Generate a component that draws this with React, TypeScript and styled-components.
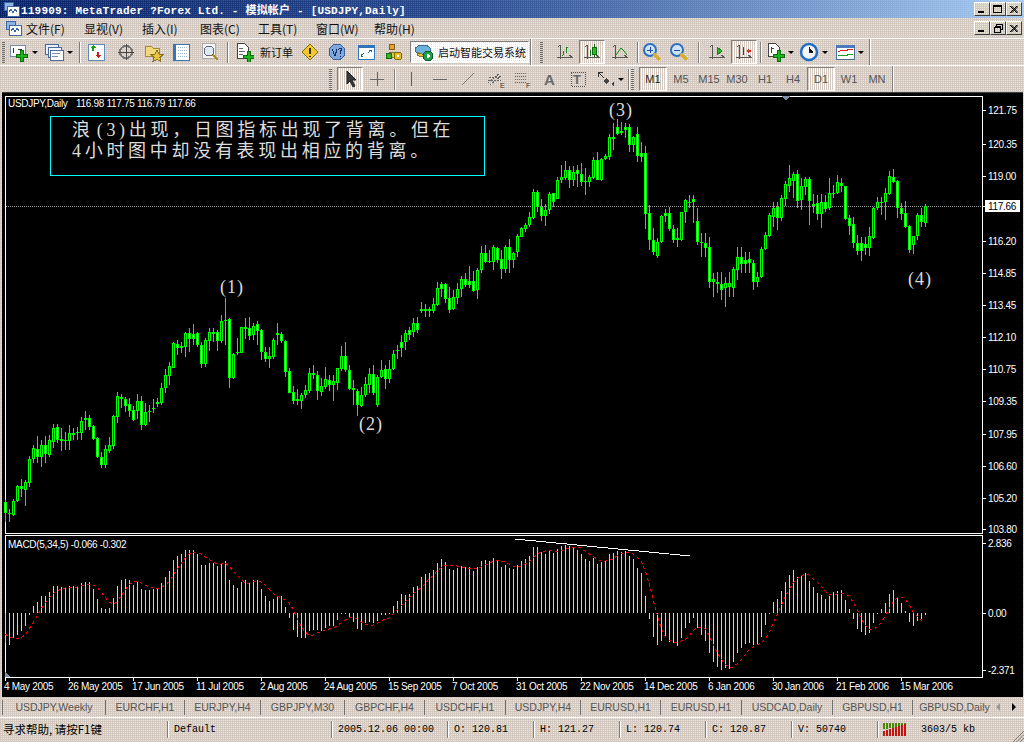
import React from 'react'
import styled, { createGlobalStyle, css } from 'styled-components'

const GlobalStyle = createGlobalStyle`
  html, body {
    margin: 0;
    padding: 0;
    background: #000;
  }
  body {
    width: 1024px;
    height: 742px;
    overflow: hidden;
    font-family: "Liberation Sans", "Noto Sans CJK SC", sans-serif;
  }
`

// 256-colour desktop: the grey chrome comes out as a dotted dither
const chrome = css`
  background-color: #d3c9c1;
  background-image: conic-gradient(#ebe8d6 0 25%, transparent 0);
  background-size: 2px 2px;
`

const Page = styled.div`
  width: 1024px;
  height: 742px;
  display: flex;
  flex-direction: column;
  ${chrome}
`

const TitleBar = styled.div`
  height: 18px;
  display: flex;
  align-items: center;
  padding-left: 3px;
  gap: 1px;
  background-image: conic-gradient(rgba(255, 255, 255, 0.14) 0 25%, transparent 0),
    linear-gradient(90deg, #0a246a 0%, #2c4c90 45%, #a6caf0 100%);
  background-size: 2px 2px, 100% 100%;
`

const TitleText = styled.div`
  flex: 1;
  color: #fff;
  font: bold 11px "Liberation Mono", "Noto Sans CJK SC", monospace;
  letter-spacing: 0.2px;
  white-space: pre;
`

const MenuBar = styled.div`
  height: 20px;
  display: flex;
  align-items: center;
  padding-left: 5px;
`

const MenuIcon = styled.div`
  width: 21px;
  height: 16px;
`

const MenuItem = styled.div`
  width: 58px;
  font: 12px "Noto Sans CJK SC", sans-serif;
  color: #111;
  white-space: nowrap;
`

const MenuSpacer = styled.div`
  flex: 1;
`

const WindowButtons = styled.div`
  display: flex;
  margin-right: 2px;
`

const WindowButton = styled.div`
  width: 16px;
  height: 14px;
  box-sizing: border-box;
  ${chrome}
  border: 1px solid;
  border-color: #fff #404040 #404040 #fff;
  display: flex;
  align-items: center;
  justify-content: center;
`

const Toolbar = styled.div`
  height: 27px;
  box-sizing: border-box;
  display: flex;
  align-items: center;
  border-top: 1px solid #fff;
`

const ToolbarTail = styled.div`
  width: 1px;
  height: 26px;
  background: #808080;
  box-shadow: 1px 0 #fff;
  margin-left: 1px;
`

const Grip = styled.div<{ $left?: number; $right?: number }>`
  width: 3px;
  height: 21px;
  margin: 0 ${(p) => p.$right ?? 2}px 0 ${(p) => p.$left ?? 2}px;
  background-image: linear-gradient(#6f6f6f 50%, transparent 50%);
  background-size: 3px 2px;
`

const Separator = styled.div<{ $w: number }>`
  width: ${(p) => p.$w}px;
  height: 21px;
  display: flex;
  justify-content: center;
  &::before {
    content: '';
    width: 1px;
    background: #808080;
    box-shadow: 1px 0 #fff;
  }
`

const ToolButton = styled.div<{ $w: number; $pressed?: boolean }>`
  width: ${(p) => p.$w}px;
  height: 24px;
  box-sizing: border-box;
  display: flex;
  align-items: center;
  justify-content: center;
  gap: 1px;
  ${(p) =>
    p.$pressed &&
    css`
      border: 1px solid;
      border-color: #808080 #fff #fff #808080;
      background-image: conic-gradient(#fff 0 50%, transparent 0);
      background-size: 2px 2px;
    `}
`

const Caret = styled.div`
  width: 0;
  height: 0;
  border-left: 3px solid transparent;
  border-right: 3px solid transparent;
  border-top: 3px solid #000;
  margin-left: 2px;
`

const OrderLabel = styled.span`
  font: 11px "Noto Sans CJK SC", sans-serif;
  color: #111;
  margin-left: 5px;
  white-space: nowrap;
`

const ExpertBox = styled.div`
  width: 119px;
  height: 22px;
  margin-left: 3px;
  box-sizing: border-box;
  border: 1px solid #fff;
  border-color: #808080 #fff #fff #808080;
  background-image: conic-gradient(#fff 0 75%, transparent 0);
  background-size: 2px 2px;
  display: flex;
  align-items: center;
  gap: 4px;
  padding-left: 3px;
  font: 11px "Noto Sans CJK SC", sans-serif;
  color: #111;
  white-space: nowrap;
`

const PeriodButton = styled(ToolButton)<{ $dark?: boolean }>`
  font-size: 11px;
  color: ${(p) => (p.$dark ? '#222' : '#555')};
`

const ChartArea = styled.div`
  position: relative;
  height: 604px;
  margin: 0 1px 0 2px;
  background: #000;
  display: flex;
  flex-direction: column;
  border-top: 1px solid #404040;
`

const ChartSvg = styled.svg`
  display: block;
  flex: none;
  text {
    font-family: "Liberation Sans", sans-serif;
    font-size: 10px;
    letter-spacing: -0.3px;
    fill: #fff;
  }
  text.wave {
    font-family: "Liberation Serif", serif;
    font-size: 18px;
    fill: #ddd;
    letter-spacing: 1px;
  }
`

const NoteBox = styled.div`
  position: absolute;
  left: 48px;
  top: 23px;
  width: 435px;
  height: 60px;
  box-sizing: border-box;
  border: 1px solid #00ffff;
  padding: 3px 0 0 21px;
  color: #ddd;
  font: 18px/21px "Liberation Serif", "Noto Sans CJK SC", serif;
  letter-spacing: 3.7px;
  white-space: nowrap;
`

const NoteRef = styled.span`
  margin-left: 3px;
`

const TabStrip = styled.div`
  height: 20px;
  display: flex;
  align-items: center;
  padding-left: 2px;
`

const Tab = styled.div<{ $w: number }>`
  width: ${(p) => p.$w}px;
  height: 15px;
  line-height: 15px;
  text-align: center;
  font-size: 10.5px;
  color: #555;
  border-left: 1px solid #707070;
  box-sizing: border-box;
  white-space: nowrap;
`

const TabArrows = styled.div`
  flex: 1;
  display: flex;
  align-items: center;
  gap: 12px;
`

const TabArrow = styled.div<{ $right?: boolean }>`
  width: 0;
  height: 0;
  border-top: 4px solid transparent;
  border-bottom: 4px solid transparent;
  ${(p) => (p.$right ? 'border-left: 4px solid #000;' : 'border-right: 4px solid #999;')}
`

const StatusBar = styled.div`
  position: relative;
  flex: 1;
  display: flex;
  align-items: center;
  border-top: 1px solid #fff;
  padding-bottom: 2px;
`

const StatusCell = styled.div<{ $w: number; $cjk?: boolean }>`
  width: ${(p) => p.$w}px;
  height: 17px;
  line-height: 17px;
  box-sizing: border-box;
  padding-left: ${(p) => (p.$cjk ? 3 : 6)}px;
  border-right: 1px solid #808080;
  box-shadow: 1px 0 #fff;
  font: ${(p) => (p.$cjk ? '11.5px/17px "Noto Sans CJK SC", sans-serif' : '10px/17px "Liberation Mono", monospace')};
  color: #000;
  white-space: pre;
`

const Traffic = styled.div`
  display: flex;
  align-items: center;
  gap: 14px;
  padding-left: 5px;
  font: 10px "Liberation Mono", monospace;
  color: #000;
`

const Resize = styled.svg`
  position: absolute;
  right: 0;
  bottom: 0;
`

/* --- toolbar glyphs --- */

const Ico = ({ children, w = 20, h = 20 }: { children: React.ReactNode; w?: number; h?: number }) => (
  <svg width={w} height={h} viewBox={`0 0 ${w} ${h}`} shapeRendering="crispEdges">
    {children}
  </svg>
)

const Axes = ({ c = '#555' }: { c?: string }) => (
  <path d="M5 3v14M2 15h16M5 3l-2 2M14 13l3 2" stroke={c} fill="none" />
)

const Plus = ({ x, y }: { x: number; y: number }) => (
  <path d={`M${x + 4} ${y}h3v4h4v3h-4v4h-3v-4h-4v-3h4z`} fill="#1db51d" stroke="#0a6f0a" />
)

const icons: Record<string, React.ReactNode> = {
  app: (
    <>
      <rect x="1" y="1" width="9" height="8" fill="#8fb4e0" stroke="#3b66a8" />
      <rect x="4" y="5" width="12" height="10" fill="#fff" stroke="#3b66a8" />
      <path d="M6 11l2-3 2 4 2-4 2 3" stroke="#3b66a8" fill="none" />
    </>
  ),
  newChart: (
    <>
      <rect x="1" y="3" width="15" height="11" fill="#fff" stroke="#7a8aa8" />
      <path d="M4 6v5M9 7h4" stroke="#333" />
      <Plus x={7} y={8} />
    </>
  ),
  profiles: (
    <>
      <rect x="1" y="2" width="13" height="10" fill="#e8eef8" stroke="#4a6a9a" />
      <rect x="4" y="5" width="13" height="10" fill="#f4f7fc" stroke="#4a6a9a" />
      <rect x="6" y="8" width="13" height="10" fill="#fff" stroke="#4a6a9a" />
      <path d="M8 11h8M8 14h6" stroke="#7a8aa8" />
    </>
  ),
  watch: (
    <>
      <rect x="2" y="2" width="16" height="16" fill="#fff" stroke="#5c8ac0" />
      <path d="M7 3l3 3H8v3H6V6H4z" fill="#16a016" />
      <path d="M12 16l-3-3h2v-3h2v3h2z" fill="#c02020" />
    </>
  ),
  crosshair: (
    <>
      <circle cx="10" cy="10" r="6" fill="none" stroke="#777" strokeWidth="2" />
      <path d="M10 2v16M2 10h16" stroke="#444" />
    </>
  ),
  folderStar: (
    <>
      <path d="M1 4h6l2 2h6v8H1z" fill="#f2d77c" stroke="#a88a3a" />
      <path d="M13 8l2 4 4 .5-3 3 1 4-4-2-4 2 1-4-3-3 4-.5z" fill="#e8c440" stroke="#8a7320" />
    </>
  ),
  terminal: (
    <>
      <rect x="2" y="2" width="16" height="16" fill="#fff" stroke="#3a74b8" strokeWidth="1" />
      <rect x="2" y="2" width="3" height="16" fill="#3a74b8" />
      <path d="M7 5h9M7 8h9M7 11h9M7 14h9" stroke="#9bb4d0" strokeDasharray="1 1" />
    </>
  ),
  tester: (
    <>
      <rect x="2" y="1" width="13" height="15" fill="#f4f4f4" stroke="#aaa" />
      <circle cx="9" cy="9" r="5" fill="#dfe9f3" stroke="#667" />
      <path d="M13 13l5 5" stroke="#b08a20" strokeWidth="2" />
    </>
  ),
  order: (
    <>
      <path d="M3 1h7l4 4v11H3z" fill="#fff" stroke="#444" />
      <path d="M5 6h4M5 9h6M5 12h4" stroke="#666" />
      <Plus x={9} y={9} />
    </>
  ),
  alert: (
    <>
      <path d="M10 2l8 8-8 8-8-8z" fill="#f0c92c" stroke="#8a6a10" />
      <path d="M10 6v6M10 14v1" stroke="#402a00" strokeWidth="2" />
    </>
  ),
  expert: (
    <>
      <circle cx="10" cy="10" r="8" fill="#7ea8dc" stroke="#3a5f9a" />
      <path d="M5 7l3 7 2-7M11 8l2-2 2 1-2 3v2M13 14v1" stroke="#10306a" fill="none" />
    </>
  ),
  full: (
    <>
      <rect x="2" y="3" width="16" height="14" fill="#fff" stroke="#2f74bc" />
      <rect x="2" y="3" width="16" height="3" fill="#2f74bc" />
      <path d="M5 14l3-3M5 14v-2M5 14h2M15 8l-3 3M15 8v2M15 8h-2" stroke="#1c5ea4" />
    </>
  ),
  users: (
    <>
      <circle cx="8" cy="5" r="3" fill="#e8a23c" stroke="#8a5a10" />
      <path d="M3 15c0-6 10-6 10 0z" fill="#e8c040" stroke="#8a7320" />
      <circle cx="5" cy="14" r="3" fill="#2fb52f" stroke="#0d6d0d" />
      <circle cx="14" cy="14" r="4" fill="#e0c020" stroke="#7a6a10" />
      <circle cx="14" cy="14" r="1" fill="#fff" />
    </>
  ),
  auto: (
    <>
      <ellipse cx="9" cy="8" rx="8" ry="5" fill="#6db2dc" stroke="#3a6f9a" />
      <path d="M3 10c3 3 9 3 12 0v3c-3 2-9 2-12 0z" fill="#e0bc40" stroke="#8a7320" />
      <circle cx="14" cy="14" r="5" fill="#1f9f4a" stroke="#0a5f2a" />
      <path d="M13 11.500l4 2.500-4 2.500z" fill="#fff" />
    </>
  ),
  bars: (
    <>
      <Axes />
      <path d="M8 13v-4M8 13h-1M11 11v-6M11 5h2" stroke="#108a10" fill="none" />
    </>
  ),
  candles: (
    <>
      <Axes />
      <path d="M12 2v13" stroke="#106a10" />
      <rect x="10" y="5" width="4" height="7" fill="#22c022" stroke="#106a10" />
      <path d="M8 8v6" stroke="#106a10" />
    </>
  ),
  line: (
    <>
      <Axes />
      <path d="M6 13l5-7 3 3 3 4" stroke="#108a10" fill="none" shapeRendering="auto" />
    </>
  ),
  zoomIn: (
    <>
      <circle cx="8" cy="8" r="6" fill="#cfe4f8" stroke="#2f6fc0" strokeWidth="2" shapeRendering="auto" />
      <path d="M5 8h6M8 5v6" stroke="#1c4f9a" />
      <path d="M12 12l6 6" stroke="#d8b030" strokeWidth="3" />
    </>
  ),
  zoomOut: (
    <>
      <circle cx="8" cy="8" r="6" fill="#cfe4f8" stroke="#2f6fc0" strokeWidth="2" shapeRendering="auto" />
      <path d="M5 8h6" stroke="#1c4f9a" />
      <path d="M12 12l6 6" stroke="#d8b030" strokeWidth="3" />
    </>
  ),
  autoScroll: (
    <>
      <Axes />
      <path d="M10 5l5 4-5 4z" fill="#2fb52f" stroke="#108a10" />
    </>
  ),
  shift: (
    <>
      <Axes />
      <path d="M9 5v8" stroke="#444" />
      <path d="M12 9l3-3v2h2v2h-2v2z" fill="#d83020" />
    </>
  ),
  addInd: (
    <>
      <path d="M3 1h7l4 4v9H3z" fill="#fff" stroke="#444" />
      <path d="M6 5v6M6 6h3" stroke="#444" />
      <Plus x={8} y={8} />
    </>
  ),
  clock: (
    <>
      <circle cx="10" cy="10" r="8" fill="#f4f4f4" stroke="#1f6fc4" strokeWidth="2.500" shapeRendering="auto" />
      <path d="M10 5v5h4" stroke="#222" />
    </>
  ),
  template: (
    <>
      <rect x="1" y="3" width="18" height="14" fill="#fff" stroke="#4a6a9a" />
      <rect x="1" y="3" width="18" height="3" fill="#4a7abc" />
      <path d="M3 10l4-2 3 1 5-2 3 1" stroke="#d02020" fill="none" />
      <path d="M3 14l4-1 3 1 5-2 3 1" stroke="#20a020" fill="none" />
    </>
  ),
  cursor: <path d="M7 2v13l3-3 3 6 2-1-3-6h4z" fill="#3a3a3a" stroke="#222" shapeRendering="auto" />,
  cross: <path d="M10 3v14M3 10h14" stroke="#666" />,
  vline: <path d="M10 3v14" stroke="#666" />,
  hline: <path d="M3 10h14" stroke="#666" />,
  trend: <path d="M4 16L16 4" stroke="#777" shapeRendering="auto" />,
  fibE: (
    <>
      <path d="M2 14L14 4M4 16L16 6M2 11h13M3 8h11" stroke="#666" fill="none" strokeDasharray="2 1" />
      <text x="14" y="19" fontSize="7" fontFamily="Liberation Sans" fill="#333">
        E
      </text>
    </>
  ),
  fibF: (
    <>
      <path d="M2 4h12M2 7h12M2 10h12M2 13h12" stroke="#666" strokeDasharray="1 1" />
      <text x="13" y="19" fontSize="7" fontFamily="Liberation Sans" fill="#333">
        F
      </text>
    </>
  ),
  letterA: (
    <text x="4" y="16" fontSize="15" fontWeight="bold" fontFamily="Liberation Sans" fill="#6a6a6a">
      A
    </text>
  ),
  letterT: (
    <>
      <rect x="3" y="3" width="14" height="14" fill="none" stroke="#555" strokeDasharray="1 1" />
      <text x="5" y="15" fontSize="13" fontWeight="bold" fontFamily="Liberation Sans" fill="#6a6a6a">
        T
      </text>
    </>
  ),
  arrows: (
    <>
      <path d="M3 3h5M3 3v5M3 3l6 6" stroke="#333" />
      <path d="M11 9l4 3-4 3-3-3z" fill="#444" />
      <path d="M16 15l3-2v4z" fill="#444" />
    </>
  ),
}

type Tool = { icon?: string; w: number; pressed?: boolean; caret?: boolean; sep?: boolean }

const mainTools: Tool[] = [
  { icon: 'newChart', w: 33, caret: true },
  { icon: 'profiles', w: 36, caret: true },
  { sep: true, w: 6 },
  { icon: 'watch', w: 28 },
  { icon: 'crosshair', w: 31 },
  { icon: 'folderStar', w: 25 },
  { icon: 'terminal', w: 29 },
  { icon: 'tester', w: 29 },
  { sep: true, w: 6 },
]

const afterOrder: Tool[] = [
  { icon: 'alert', w: 26 },
  { icon: 'expert', w: 28 },
  { icon: 'full', w: 30 },
  { icon: 'users', w: 26 },
]

const chartTools: Tool[] = [
  { icon: 'bars', w: 28 },
  { icon: 'candles', w: 26, pressed: true },
  { icon: 'line', w: 30 },
  { sep: true, w: 4 },
  { icon: 'zoomIn', w: 26 },
  { icon: 'zoomOut', w: 28 },
  { sep: true, w: 10 },
  { icon: 'autoScroll', w: 28 },
  { icon: 'shift', w: 26, pressed: true },
  { sep: true, w: 6 },
  { icon: 'addInd', w: 33, caret: true },
  { icon: 'clock', w: 34, caret: true },
  { icon: 'template', w: 38, caret: true },
]

const drawTools: Tool[] = [
  { icon: 'cursor', w: 26, pressed: true },
  { icon: 'cross', w: 28 },
  { sep: true, w: 6 },
  { icon: 'vline', w: 28 },
  { icon: 'hline', w: 29 },
  { icon: 'trend', w: 28 },
  { icon: 'fibE', w: 27 },
  { icon: 'fibF', w: 27 },
  { icon: 'letterA', w: 28 },
  { icon: 'letterT', w: 28 },
  { icon: 'arrows', w: 34, caret: true },
  { sep: true, w: 5 },
]

const periods = ['M1', 'M5', 'M15', 'M30', 'H1', 'H4', 'D1', 'W1', 'MN']

const ToolRun = ({ tools }: { tools: Tool[] }) => (
  <>
    {tools.map((t, i) =>
      t.sep ? (
        <Separator key={i} $w={t.w} />
      ) : (
        <ToolButton key={i} $w={t.w} $pressed={t.pressed}>
          <Ico>{icons[t.icon as string]}</Ico>
          {t.caret && <Caret />}
        </ToolButton>
      )
    )}
  </>
)

/* --- USDJPY daily quotes as screen rows: [bodyTop, bodyBottom, high, low, filled] in third-pixels --- */

type Row = [number, number, number, number, number?]

const firstRun: Row[] = [
  [605,640,600,665,1],[638,640,628,665],[603,645,597,648],[558,602,555,605],[558,568,537,590,1],[547,570,540,617],[478,548,468,560],[445,478,435,490],
  [448,470,408,490,1],[435,470,420,500],[435,463,408,490,1],[420,465,405,472],[385,425,372,445],[382,420,372,430,1],[418,422,385,452],[420,424,395,450],
  [400,422,375,450],[400,404,385,420],[396,398,380,420],[364,398,350,420],[355,361,333,390,1],[355,380,345,390,1],[378,418,375,420,1],[415,472,410,475,1],
  [472,494,455,505,1],[448,494,435,503],[436,452,412,460],[348,437,345,447],[289,352,277,368],[291,297,283,325,1],[297,318,292,335,1],[313,332,295,352,1],
  [331,359,318,362,1],[304,332,283,358],[304,376,288,390,1],[337,376,310,378],[332,337,315,365],[324,328,298,338],[307,311,293,322],[265,309,250,315],
  [226,265,208,280],[199,227,185,255],[130,203,127,205],[133,143,120,165,1],[139,143,125,160],[100,141,95,170],[100,116,85,155,1],[103,116,72,135,1],
  [100,134,95,140,1],[136,193,125,205,1],[121,193,113,200],[97,122,85,152],[97,103,85,125,1],[97,122,90,152,1],[64,122,45,128],[59,62,-7,135],
  [58,233,55,265,1],[163,233,160,238],[155,158,115,165],[82,158,80,160],[82,86,55,118],[85,107,50,120,1],[79,104,70,120],[73,92,62,135,1],
  [91,157,88,180,1],[157,177,140,185,1],[169,176,140,205],[121,171,115,178],[100,104,70,135],[103,124,95,128,1],[124,215,120,230,1],[214,278,203,280,1],
  [277,302,258,313,1],[298,304,268,316,1],[286,304,278,326],[271,286,255,295],[220,272,205,280],[219,224,196,238],[226,274,212,300,1],[259,275,235,288],
  [238,260,202,268],[241,255,225,272,1],[244,254,225,302],[205,248,203,270],[169,208,138,212],[169,211,127,215,1],[211,268,195,270,1],[265,269,240,315],
  [274,316,268,347,1],[286,318,262,320],[252,286,232,290],[221,255,205,280],[221,280,195,285,1],[232,315,225,320],[211,232,180,235],[208,236,195,266,1],
  [208,236,180,250],[163,208,150,210],[150,152,135,178],
]

const secondRun: Row[] = [
  [725,745,705,770,1],[700,725,690,750],[690,705,680,720,1],[668,695,655,710],[668,690,650,700,1],[628,632,606,640],[628,632,612,650],[628,632,620,650],
  [612,632,595,640],[565,615,545,618],[553,567,545,590,1],[553,596,548,608,1],[595,630,562,640,1],[592,627,570,630],[568,593,548,612],[538,568,528,590],
  [538,554,518,562,1],[544,555,498,565,1],[544,572,513,575,1],[510,570,505,597],[460,510,437,518],[460,486,434,490,1],[482,486,450,490],[442,485,435,510],
  [445,480,440,490,1],[478,507,450,537,1],[442,507,436,518],[442,480,418,520,1],[459,479,455,504],[408,455,403,470],[385,410,380,412],[376,386,368,395],
  [352,375,335,382],[277,354,268,357],[277,320,270,335,1],[320,347,297,362,1],[331,347,312,378],[282,329,276,342],[280,305,278,320,1],[240,296,232,298],
  [232,240,195,250],[211,233,183,240],[211,240,198,263,1],[217,240,197,258],[211,222,195,260,1],[223,246,190,258,1],[244,246,205,285],[232,246,225,262],
  [180,234,170,236],[181,240,156,240,1],
]

const thirdRun: Row[] = [
  [192,256,190,258],[184,192,178,196],[127,186,118,194],[127,133,85,165,1],[97,116,72,120,1],[109,113,82,120,1],[97,106,85,130,1],[97,149,88,172,1],
  [127,150,122,170],[118,184,97,200,1],[175,187,140,200,1],[175,356,153,403,1],[355,436,330,465,1],[436,472,400,480,1],[442,483,430,488],[364,442,360,445],
  [355,364,342,380,1],[355,403,335,408,1],[403,435,390,445,1],[430,434,400,455],[352,434,350,437],[316,352,312,385],[322,325,300,338],[313,322,300,385,1],
  [378,440,340,450,1],[440,445,415,485,1],[445,458,415,485,1],[457,562,425,578,1],[553,560,535,607],[560,568,530,595,1],[568,585,530,615,1],[564,580,545,635],
  [565,575,530,605],[522,578,515,607],[487,526,455,555],[487,507,457,535,1],[495,507,470,535,1],[493,505,470,535,1],[505,562,495,585,1],[545,562,530,575],
  [462,545,455,548],[421,463,410,465],[361,422,355,425],[340,366,322,395],[336,369,322,405,1],[309,369,300,378],[268,311,258,333],[250,272,210,290],
  [237,258,230,308],[238,317,225,340,1],[274,315,250,345],[252,276,245,300],[252,317,245,390,1],[327,332,298,355],[325,356,300,375,1],[320,356,298,400],
  [322,341,300,350,1],[295,340,250,345],[295,298,270,310],[262,295,240,298],[265,272,250,290,1],[274,373,272,375,1],[370,392,360,420,1],[388,445,365,460,1],
  [445,467,420,480,1],[445,467,425,497,1],[448,460,425,480,1],[424,460,395,483],[340,428,335,432],[322,340,305,345],[320,324,305,360],[295,322,280,375],
  [243,296,228,300],[246,260,222,265,1],[258,340,255,370,1],[340,356,325,375,1],[355,396,318,398,1],[394,465,390,475,1],[424,450,422,478],[360,422,355,435],
  [360,380,340,395,1],[334,383,328,395],
]

const candleX = (i: number) => 5 + 4 * i

const candleRuns: { start: number; top: number; rows: Row[] }[] = [
  { start: 0, top: 300, rows: firstRun },
  { start: 99, top: 100, rows: secondRun },
  { start: 149, top: 95, rows: thirdRun },
]

const candles = candleRuns.flatMap((run) =>
  run.rows.map(([a, b, hi, lo, filled], k) => {
    const px = (v: number) => Math.round(run.top + v / 3)
    return { x: candleX(run.start + k), top: px(a), bottom: px(b), hi: px(hi), lo: px(lo), filled: !!filled }
  })
)

/* MACD bar tips in third-pixels below y=530; zero line sits at 250 */
const macdTips: number[] = [
  338,345,325,315,302,288,255,228,215,197,197,186,168,168,172,172,168,168,168,160,157,157,177,207,233,237,233,204,168,150,147,150,165,155,177,180,180,177,177,158,140,123,90,78,72,60,60,60,72,105,105,98,98,108,98,93,150,165,175,156,150,156,150,150,177,198,213,207,198,198,231,265,300,320,323,323,303,300,300,303,295,288,288,270,
  252,252,262,275,297,300,280,275,280,272,255,255,253,228,213,192,195,192,171,168,141,132,129,120,99,87,96,117,120,114,108,111,111,123,111,93,90,93,84,93,111,105,114,117,105,93,87,78,51,51,66,72,63,69,57,48,45,48,51,60,72,87,93,84,102,96,93,72,69,63,66,63,78,87,114,129,198,268,320,345,332,322,335,340,348,
  325,295,280,265,295,315,333,370,395,410,420,415,417,395,368,355,342,340,345,345,320,285,250,217,207,182,156,135,120,140,135,130,153,170,190,195,206,198,185,183,180,210,236,267,297,305,315,308,280,252,237,218,192,180,200,218,242,275,288,272,268,255,
]

const macdY = (z: number) => 530 + z / 3

// signal line is a 5 bar average of the histogram
const signalPoints = macdTips
  .map((_, i) => {
    const win = Array.from({ length: 5 }, (_x, k) => macdTips[i - k] ?? 305)
    const avg = win.reduce((s, v) => s + v, 0) / 5
    return `${candleX(i)},${Math.round(macdY(avg))}`
  })
  .join(' ')

const priceTicks: [string, number][] = [
  ['121.75', 110], ['120.35', 144], ['119.00', 176], ['116.20', 241], ['114.85', 273], ['113.45', 305],
  ['112.10', 337], ['110.75', 369], ['109.35', 401], ['107.95', 434], ['106.60', 466], ['105.20', 498], ['103.80', 529],
]

const macdTicks: [string, number][] = [['2.836', 543], ['0.00', 613], ['-2.371', 670]]

const dates = [
  '4 May 2005', '26 May 2005', '17 Jun 2005', '11 Jul 2005', '2 Aug 2005', '24 Aug 2005', '15 Sep 2005', '7 Oct 2005',
  '31 Oct 2005', '22 Nov 2005', '14 Dec 2005', '6 Jan 2006', '30 Jan 2006', '21 Feb 2006', '15 Mar 2006',
]

const waves: [string, number, number][] = [
  ['(1)', 220, 293],
  ['(2)', 359, 430],
  ['(3)', 609, 116],
  ['(4)', 908, 285],
]

const PriceChart = () => (
  <ChartSvg width={1024} height={441} viewBox="2 93 1024 441">
    <g shapeRendering="crispEdges">
      <path d="M5.500 533.500V96.500H982.500V533.500" stroke="#fff" fill="none" />
      <line x1={5} x2={983} y1={533.5} y2={533.5} stroke="#fff" />
      <line x1={6} x2={982} y1={206.5} y2={206.5} stroke="#999" strokeDasharray="1 1" />
      {candles.map((c, i) => (
        <g key={i}>
          <rect x={c.x} y={c.hi} width={1} height={Math.max(c.lo - c.hi, 1)} fill="#00ff00" />
          <rect x={c.x - 1} y={c.top} width={3} height={Math.max(c.bottom - c.top, 1)} fill="#00ff00" />
          <rect
            x={c.x}
            y={c.top + 1}
            width={1}
            height={Math.max(c.bottom - c.top - 2, 0)}
            fill={c.filled ? '#fff' : '#000'}
          />
        </g>
      ))}
      {[...priceTicks.map((t) => t[1]), 206].map((y) => (
        <line key={y} x1={982} x2={986} y1={y + 0.5} y2={y + 0.5} stroke="#fff" />
      ))}
      <rect x={985} y={200} width={35} height={12} fill="#fff" />
      <path d="M782 96h8l-4 5z" fill="#7f8fa8" />
    </g>
    <text x={8} y={107}>USDJPY,Daily</text>
    <text x={76} y={107}>116.98 117.75 116.79 117.66</text>
    {priceTicks.map(([label, y]) => (
      <text key={label} x={988} y={y + 4}>
        {label}
      </text>
    ))}
    <text x={988} y={210} style={{ fill: '#000' }}>
      117.66
    </text>
    {waves.map(([label, x, y]) => (
      <text key={label} className="wave" x={x} y={y}>
        {label}
      </text>
    ))}
  </ChartSvg>
)

const MacdChart = () => (
  <ChartSvg width={1024} height={143} viewBox="2 534 1024 143">
    <g shapeRendering="crispEdges">
      <path d="M5.500 678V535.500H982.500V678" stroke="#fff" fill="none" />
      {macdTips.map((z, i) => {
        const tip = Math.round(macdY(z))
        return (
          <rect
            key={i}
            x={candleX(i)}
            y={Math.min(tip, 613)}
            width={1}
            height={Math.max(Math.abs(tip - 613), 1)}
            fill="#cfcfcf"
          />
        )
      })}
      <polyline points={signalPoints} fill="none" stroke="#ff0000" strokeDasharray="3 3" />
      <path d="M515 539l175 17" stroke="#fff" strokeWidth="1" fill="none" />
      {macdTicks.map(([, y]) => (
        <line key={y} x1={982} x2={986} y1={y + 0.5} y2={y + 0.5} stroke="#fff" />
      ))}
      <path d="M5 672l5 5H5z" fill="#7f8fa8" />
    </g>
    <text x={8} y={548}>MACD(5,34,5) -0.066 -0.302</text>
    {macdTicks.map(([label, y]) => (
      <text key={label} x={988} y={y + 4}>
        {label}
      </text>
    ))}
  </ChartSvg>
)

const DateAxis = () => (
  <ChartSvg width={1024} height={20} viewBox="2 677 1024 20">
    <g shapeRendering="crispEdges">
      <line x1={5} x2={983} y1={677.5} y2={677.5} stroke="#fff" />
      {dates.map((d, i) => (
        <line key={d} x1={5.5 + 64 * i} x2={5.5 + 64 * i} y1={677} y2={681} stroke="#fff" />
      ))}
    </g>
    {dates.map((d, i) => (
      <text key={d} x={4 + 64 * i} y={690}>
        {d}
      </text>
    ))}
  </ChartSvg>
)

const tabs: [string, number][] = [
  ['USDJPY,Weekly', 103], ['EURCHF,H1', 79], ['EURJPY,H4', 76], ['GBPJPY,M30', 84], ['GBPCHF,H4', 80], ['USDCHF,H1', 81],
  ['USDJPY,H4', 75], ['EURUSD,H1', 80], ['EURUSD,H1', 81], ['USDCAD,Daily', 91], ['GBPUSD,H1', 80], ['GBPUSD,Daily', 84],
]

const menus = ['文件(F)', '显视(V)', '插入(I)', '图表(C)', '工具(T)', '窗口(W)', '帮助(H)']

const statusCells: [string, number][] = [
  ['Default', 164], ['2005.12.06 00:00', 116], ['O: 120.81', 86], ['H: 121.27', 86], ['L: 120.74', 86], ['C: 120.87', 86], ['V: 50740', 86],
]

const ConnectionBars = () => (
  <svg width={24} height={13} viewBox="0 0 24 13" shapeRendering="crispEdges">
    {Array.from({ length: 8 }, (_, i) => (
      <g key={i}>
        <rect x={i * 3} y={0} width={2} height={13 - (7 + i * 0.5)} fill="#4a8a00" />
        <rect x={i * 3} y={13 - (5 + i)} width={2} height={5 + i} fill="#c01810" />
      </g>
    ))}
  </svg>
)

const MinGlyph = () => (
  <svg width={8} height={8} viewBox="0 0 8 8" shapeRendering="crispEdges">
    <rect x={0} y={6} width={6} height={2} fill="#000" />
  </svg>
)

const MaxGlyph = () => (
  <svg width={10} height={9} viewBox="0 0 10 9" shapeRendering="crispEdges">
    <path d="M0.500 0.500h8v7h-8zM0.500 1.500h8" stroke="#000" fill="none" />
  </svg>
)

const RestoreGlyph = () => (
  <svg width={9} height={9} viewBox="0 0 9 9" shapeRendering="crispEdges">
    <path d="M2.500 2V.5h6v5H7M.5 3.500h6v5h-6zM.5 2.500h6" stroke="#000" fill="none" />
  </svg>
)

const CloseGlyph = () => (
  <svg width={8} height={7} viewBox="0 0 8 7">
    <path d="M0 0l7 7M1.500 0l7 7M7 0L0 7M8.500 0L1.500 7" stroke="#000" />
  </svg>
)

export default function App() {
  return (
    <Page>
      <GlobalStyle />
      <TitleBar>
        <Ico w={17} h={16}>{icons.app}</Ico>
        <TitleText>119909: MetaTrader ?Forex Ltd. - 模拟帐户 - [USDJPY,Daily]</TitleText>
        <WindowButtons>
          <WindowButton><MinGlyph /></WindowButton>
          <WindowButton><MaxGlyph /></WindowButton>
          <WindowButton><CloseGlyph /></WindowButton>
        </WindowButtons>
      </TitleBar>

      <MenuBar>
        <MenuIcon>
          <Ico w={17} h={16}>{icons.app}</Ico>
        </MenuIcon>
        {menus.map((m) => (
          <MenuItem key={m}>{m}</MenuItem>
        ))}
        <MenuSpacer />
        <WindowButtons>
          <WindowButton><MinGlyph /></WindowButton>
          <WindowButton><RestoreGlyph /></WindowButton>
          <WindowButton><CloseGlyph /></WindowButton>
        </WindowButtons>
      </MenuBar>

      <Toolbar>
        <Grip />
        <ToolRun tools={mainTools} />
        <ToolButton $w={67}>
          <Ico>{icons.order}</Ico>
          <OrderLabel>新订单</OrderLabel>
        </ToolButton>
        <ToolRun tools={afterOrder} />
        <ExpertBox>
          <Ico>{icons.auto}</Ico>
          启动智能交易系统
        </ExpertBox>
        <ToolbarTail />
        <Grip $left={9} $right={8} />
        <ToolRun tools={chartTools} />
        <ToolbarTail />
      </Toolbar>

      <Toolbar>
        <Grip $left={329} $right={5} />
        <ToolRun tools={drawTools} />
        <Grip $left={0} $right={5} />
        {periods.map((p) => (
          <PeriodButton key={p} $w={28} $pressed={p === 'M1' || p === 'D1'} $dark={p === 'M1'}>
            {p}
          </PeriodButton>
        ))}
        <ToolbarTail />
      </Toolbar>

      <ChartArea>
        <PriceChart />
        <MacdChart />
        <DateAxis />
        <NoteBox>
          浪<NoteRef>(3)</NoteRef>出现，日图指标出现了背离。但在
          <br />
          4小时图中却没有表现出相应的背离。
        </NoteBox>
      </ChartArea>

      <TabStrip>
        {tabs.map(([label, w], i) => (
          <Tab key={i} $w={w}>
            {label}
          </Tab>
        ))}
        <TabArrows>
          <TabArrow />
          <TabArrow $right />
        </TabArrows>
      </TabStrip>

      <StatusBar>
        <StatusCell $w={168} $cjk>
          寻求帮助, 请按F1键
        </StatusCell>
        {statusCells.map(([text, w]) => (
          <StatusCell key={text} $w={w}>
            {text}
          </StatusCell>
        ))}
        <Traffic>
          <ConnectionBars />
          3603/5 kb
        </Traffic>
        <Resize width={12} height={12} viewBox="0 0 12 12">
          <path d="M12 1L1 12M12 4.500L4.500 12M12 8L8 12" stroke="#777" />
        </Resize>
      </StatusBar>
    </Page>
  )
}
